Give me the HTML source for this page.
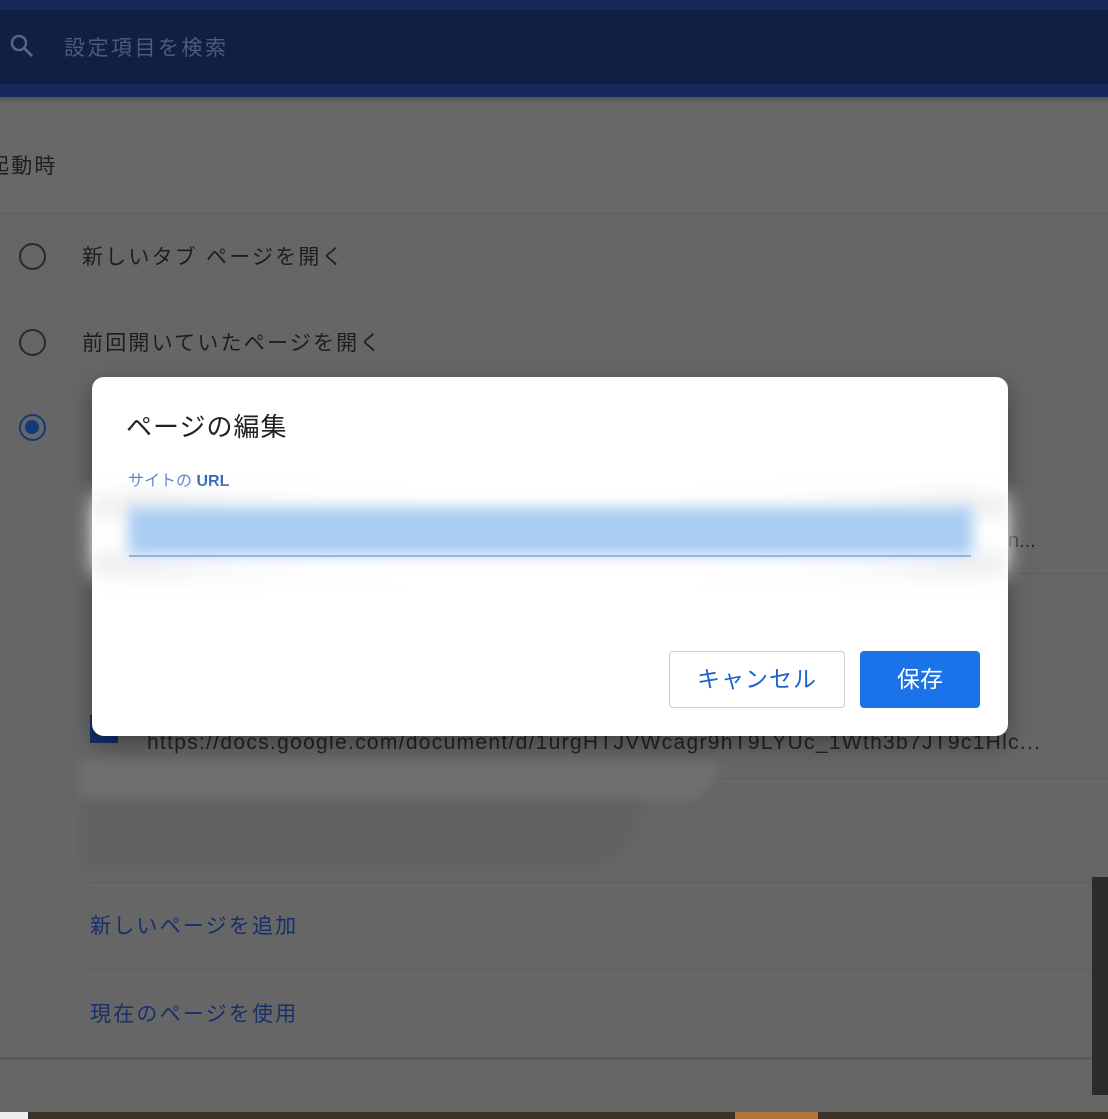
<!DOCTYPE html>
<html><head><meta charset="utf-8"><style>
*{margin:0;padding:0;box-sizing:border-box}
body{width:1108px;height:1119px;overflow:hidden;background:#666;font-family:"Liberation Sans","Noto Sans CJK JP",sans-serif;position:relative}
.a{position:absolute}
.t{color:#1e1e1e;font-size:21px}
.j{font-size:21px;letter-spacing:2.2px}
.radio{position:absolute;left:19px;width:27px;height:27px;border:2.5px solid #2a2a2a;border-radius:50%}
.line{position:absolute;height:1px;background:#5d5d5d}
</style></head><body>
<div class="a" style="left:0;top:0;width:1108px;height:97px;background:#17285a"></div>
<div class="a" style="left:0;top:10px;width:1108px;height:74px;background:#111f45"></div>
<div class="a" style="left:0;top:97px;width:1108px;height:6px;background:linear-gradient(#555,#666)"></div>
<svg class="a" style="left:8px;top:32px" width="28" height="28" viewBox="0 0 28 28"><circle cx="11" cy="11" r="7" fill="none" stroke="#5a6680" stroke-width="2.5"/><path d="M16 16l8 8" stroke="#5a6680" stroke-width="2.8"/></svg>
<div class="a j" style="left:64px;top:32px;color:#4f5b75;letter-spacing:2.5px">設定項目を検索</div>
<div class="a" style="left:0;top:103px;width:1108px;height:110px;background:#686868"></div>
<div class="a t j" style="left:-12px;top:150px">起動時</div>
<div class="line" style="left:0;top:213px;width:1108px;background:#606060"></div>
<div class="radio" style="top:243px"></div>
<div class="a t j" style="left:82px;top:241px">新しいタブ ページを開く</div>
<div class="radio" style="top:329px"></div>
<div class="a t j" style="left:82px;top:327px">前回開いていたページを開く</div>
<div class="radio" style="top:414px;border-color:#123a7a"><div style="position:absolute;left:4px;top:4px;width:14px;height:14px;border-radius:50%;background:#123a7a"></div></div>
<div class="a" style="left:90px;top:715px;width:28px;height:28px;background:#12306a"></div>
<div class="a t" style="left:147px;top:731px;font-size:21px;letter-spacing:1.3px;color:#222">https://docs.google.com/document/d/1urgHTJVWcagr9hT9LYUc_1Wth3b7JT9c1Hlc...</div>
<div class="a t" style="left:1008px;top:530px;font-size:20px;color:#222">n...</div>
<div class="line" style="left:90px;top:573px;width:1018px"></div>
<div class="line" style="left:90px;top:778px;width:1018px"></div>
<div class="a" style="left:80px;top:760px;width:640px;height:40px;background:#707070;border-radius:0 0 200px 0;filter:blur(5px)"></div>
<div class="a" style="left:80px;top:800px;width:560px;height:68px;background:#626262;border-radius:0 0 60px 0;filter:blur(5px)"></div>
<div class="line" style="left:90px;top:882px;width:1018px"></div>
<div class="a j" style="left:90px;top:910px;color:#16306b">新しいページを追加</div>
<div class="line" style="left:90px;top:969px;width:1018px"></div>
<div class="a j" style="left:90px;top:998px;color:#16306b">現在のページを使用</div>
<div class="a" style="left:0;top:1057px;width:1108px;height:3px;background:#5a5a5a"></div>
<div class="a" style="left:1092px;top:877px;width:16px;height:218px;background:#2b2b2b"></div>
<div class="a" style="left:0;top:1112px;width:1108px;height:7px;background:#3a3325"></div>
<div class="a" style="left:0;top:1112px;width:28px;height:7px;background:#eee"></div>
<div class="a" style="left:735px;top:1112px;width:83px;height:7px;background:#b27436"></div>
<div class="a" style="left:92px;top:377px;width:916px;height:359px;background:#fff;border-radius:12px;box-shadow:0 8px 24px rgba(0,0,0,.35)">
<div class="a" style="left:34px;top:30px;font-size:26px;letter-spacing:1px;color:#222">ページの編集</div>
<div class="a" style="left:36px;top:90px;font-size:16px;color:#5a84c8">サイトの <b style="color:#2f64b8">URL</b></div>
<div class="a" style="left:0px;top:118px;width:916px;height:80px;filter:blur(10px);background:radial-gradient(ellipse at center,#fff 70%,#e4e4e4 90%,#fff 100%)"></div>
<div class="a" style="left:36px;top:130px;width:845px;height:48px;background:#a9ccf2;filter:blur(7px)"></div>
<div class="a" style="left:37px;top:178px;width:842px;height:2px;background:#8eb4e0"></div>
<div class="a" style="left:577px;top:274px;width:176px;height:57px;border:1px solid #ccd;border-radius:4px;font-size:23px;color:#1e63c6;text-align:center;line-height:55px;letter-spacing:1px">キャンセル</div>
<div class="a" style="left:768px;top:274px;width:120px;height:57px;background:#1a73e8;border-radius:4px;font-size:23px;color:#fff;text-align:center;line-height:57px">保存</div>
</div>
</body></html>
